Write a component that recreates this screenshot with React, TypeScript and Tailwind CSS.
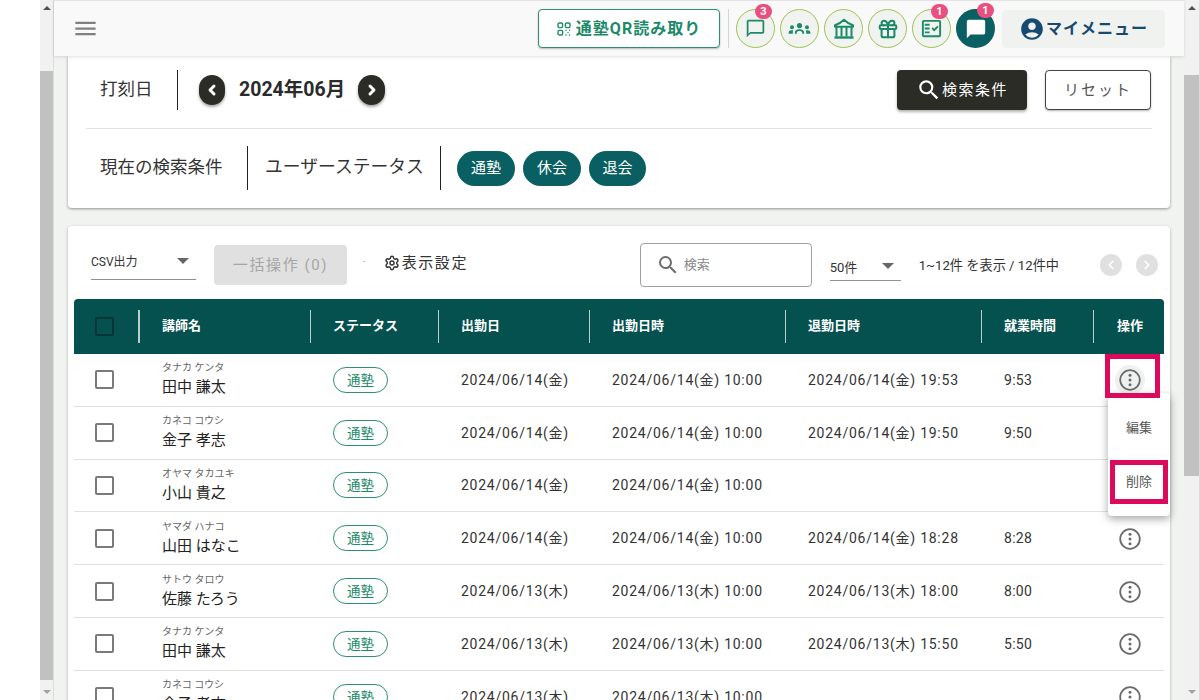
import React from 'react';
import { MdChatBubble, MdAccountCircle, MdOutlineFactCheck, MdSearch, MdOutlineChatBubbleOutline, MdMenu } from 'react-icons/md';
import { Gift, ChevronLeft, ChevronRight, Settings } from 'lucide-react';

interface Row {
  kana: string;
  name: string;
  date: string;
  start: string;
  end: string;
  hours: string;
}

const rows: Row[] = [
  { kana: 'タナカ ケンタ', name: '田中 謙太', date: '2024/06/14(金)', start: '2024/06/14(金) 10:00', end: '2024/06/14(金) 19:53', hours: '9:53' },
  { kana: 'カネコ コウシ', name: '金子 孝志', date: '2024/06/14(金)', start: '2024/06/14(金) 10:00', end: '2024/06/14(金) 19:50', hours: '9:50' },
  { kana: 'オヤマ タカユキ', name: '小山 貴之', date: '2024/06/14(金)', start: '2024/06/14(金) 10:00', end: '', hours: '' },
  { kana: 'ヤマダ ハナコ', name: '山田 はなこ', date: '2024/06/14(金)', start: '2024/06/14(金) 10:00', end: '2024/06/14(金) 18:28', hours: '8:28' },
  { kana: 'サトウ タロウ', name: '佐藤 たろう', date: '2024/06/13(木)', start: '2024/06/13(木) 10:00', end: '2024/06/13(木) 18:00', hours: '8:00' },
  { kana: 'タナカ ケンタ', name: '田中 謙太', date: '2024/06/13(木)', start: '2024/06/13(木) 10:00', end: '2024/06/13(木) 15:50', hours: '5:50' },
  { kana: 'カネコ コウシ', name: '金子 孝志', date: '2024/06/13(木)', start: '2024/06/13(木) 10:00', end: '', hours: '' },
];

const headers = ['講師名', 'ステータス', '出勤日', '出勤日時', '退勤日時', '就業時間', '操作'];
const gridCols = 'grid grid-cols-[65px_171px_128px_151px_196px_196px_112px_71px]';

const Scrollbar: React.FC<{ widthClass: string; thumbTop: string; thumbHeight: string }> = ({ widthClass, thumbTop, thumbHeight }) => (
  <div className={`${widthClass} shrink-0 bg-[#f1f1f1] flex flex-col items-center border-r border-[#dcdcdc]`}>
    <div className="h-[16px] w-full flex items-center justify-center">
      <div className="w-0 h-0 border-x-[4px] border-x-transparent border-b-[4px] border-b-[#505050]" />
    </div>
    <div className={`${thumbTop} ${thumbHeight} w-full bg-[#c1c1c1]`} />
    <div className="mt-auto h-[16px] w-full flex items-center justify-center">
      <div className="w-0 h-0 border-x-[4px] border-x-transparent border-t-[4px] border-t-[#a3a3a3]" />
    </div>
  </div>
);

const Circle: React.FC<{ badge?: string; children: React.ReactNode }> = ({ badge, children }) => (
  <div className="relative w-[39px] h-[39px] rounded-full border border-[#9cc44e] bg-[#f1f3f0] flex items-center justify-center text-[#1c8a68]">
    {children}
    {badge && (
      <span className="absolute -top-[6px] right-[2px] w-[17px] h-[15px] rounded-full bg-[#e94f7f] text-white text-[11px] font-bold leading-[15px] text-center">
        {badge}
      </span>
    )}
  </div>
);

const QrIcon: React.FC = () => (
  <svg width="14" height="14" viewBox="0 0 14 14" fill="none" stroke="currentColor" strokeWidth="1.4">
    <rect x="1" y="1" width="4.6" height="4.6" rx="1.3" />
    <rect x="8.4" y="1" width="4.6" height="4.6" rx="1.3" />
    <rect x="1" y="8.4" width="4.6" height="4.6" rx="1.3" />
    <path d="M8.4 8.4h1.2M12 8.4h1M10.4 10.7h1.2M8.4 13h1.2M12 13h1" strokeWidth="1.3" />
  </svg>
);

const GroupIcon: React.FC = () => (
  <svg width="25" height="25" viewBox="0 0 24 24" fill="currentColor">
    <circle cx="12" cy="9.2" r="2.5" />
    <path d="M7.6 17v-1.4c0-1.8 2-3 4.4-3s4.4 1.2 4.4 3V17h-1.8v-1.2c0-.8-1.1-1.4-2.6-1.4s-2.6.6-2.6 1.4V17z" />
    <circle cx="4.8" cy="10.8" r="1.9" />
    <circle cx="19.2" cy="10.8" r="1.9" />
    <path d="M1.6 17v-1.3c0-1.3 1.2-2.1 3-2.1.5 0 1 .1 1.4.2-.3.5-.4 1-.4 1.5V17zM22.4 17v-1.3c0-1.3-1.2-2.1-3-2.1-.5 0-1 .1-1.4.2.3.5.4 1 .4 1.5V17z" />
  </svg>
);

const BankIcon: React.FC = () => (
  <svg width="24" height="24" viewBox="0 0 24 24" fill="none" stroke="currentColor" strokeWidth="2" strokeLinejoin="round">
    <path d="M12 2.8c2.6 2.6 6 4.6 9 5.4v1.6H3V8.2c3-.8 6.4-2.8 9-5.4z" />
    <path d="M4.5 10v9.6M19.5 10v9.6M9.5 10v9.6M14.5 10v9.6" />
    <path d="M2.5 20.5h19" strokeWidth="2.4" />
  </svg>
);

const MoreIcon: React.FC<{ active?: boolean }> = ({ active }) => (
  <svg width="22" height="22" viewBox="0 0 22 22" fill="none" className={active ? 'rounded-full bg-[#eff1f1] shadow-[0_0_0_4px_#eff1f1]' : ''}>
    <circle cx="11" cy="11" r="9.8" stroke="#6b6b6b" strokeWidth="1.8" />
    <circle cx="11" cy="6.3" r="1.5" fill="#6b6b6b" />
    <circle cx="11" cy="11" r="1.5" fill="#6b6b6b" />
    <circle cx="11" cy="15.7" r="1.5" fill="#6b6b6b" />
  </svg>
);

const Checkbox: React.FC<{ dark?: boolean }> = ({ dark }) => (
  <div className={`w-[19px] h-[19px] rounded-[2px] border-2 ${dark ? 'border-[#0b3438]' : 'border-[#7a7a7a]'}`} />
);

const NavButton: React.FC<{ children: React.ReactNode; width: string }> = ({ children, width }) => (
  <div className={`${width} h-[30px] rounded-full bg-[#2b2c26] text-white flex items-center justify-center shadow-[0_2px_3px_rgba(0,0,0,0.35)]`}>
    {children}
  </div>
);

const Chip: React.FC<{ label: string; width: string }> = ({ label, width }) => (
  <span className={`${width} h-[35px] rounded-full bg-[#0a5f63] text-white text-[15px] flex items-center justify-center`}>{label}</span>
);

const App: React.FC = () => {
  return (
    <div className="relative flex w-[1200px] h-[700px] overflow-hidden bg-white text-[#333] font-['Roboto','Noto_Sans_CJK_JP',sans-serif]">
      <div className="w-[40px] shrink-0 bg-white" />
      <Scrollbar widthClass="w-[14px]" thumbTop="mt-[55px]" thumbHeight="h-[609px]" />

      <div className="w-[1130px] shrink-0 flex flex-col bg-[#f0f3f0]">
        {/* header */}
        <header className="relative z-10 h-[56px] shrink-0 flex items-center bg-[#f9f9f9] border-t border-[#e2e2e2] shadow-[0_1px_3px_rgba(0,0,0,0.12)]">
          <MdMenu className="ml-[18px] text-[#808080]" size={27} />
          <div className="ml-auto flex items-center">
            <div className="w-[182px] h-[39px] rounded-[4px] border border-[#2b9074] bg-white shadow-[0_1px_2px_rgba(0,0,0,0.25)] flex items-center justify-center gap-[5px] text-[#1c8a68] text-[16px] font-bold tracking-[1px]">
              <QrIcon />
              通塾QR読み取り
            </div>
            <div className="ml-[8px] mr-[7px] w-px h-[39px] bg-[#d5d5d5]" />
            <div className="flex items-center gap-[5px]">
              <Circle badge="3"><MdOutlineChatBubbleOutline size={21} /></Circle>
              <Circle><GroupIcon /></Circle>
              <Circle><BankIcon /></Circle>
              <Circle><Gift size={22} strokeWidth={2.2} /></Circle>
              <Circle badge="1"><MdOutlineFactCheck size={23} /></Circle>
              <div className="relative w-[39px] h-[39px] rounded-full bg-[#0a5f63] text-white flex items-center justify-center">
                <MdChatBubble size={22} />
                <span className="absolute -top-[6px] right-[1px] w-[17px] h-[15px] rounded-full bg-[#e94f7f] text-white text-[11px] font-bold leading-[15px] text-center">1</span>
              </div>
            </div>
            <div className="ml-[7px] mr-[19px] w-[163px] h-[38px] rounded-[4px] bg-[#f0f2ef] flex items-center justify-center gap-[1px] text-[#164a70] text-[16px] font-bold tracking-[1px]">
              <MdAccountCircle size={26} />
              マイメニュー
            </div>
          </div>
        </header>

        <main className="flex-1 overflow-hidden px-[14px]">
          {/* search conditions */}
          <section className="h-[152px] bg-white rounded-b-[4px] px-[18px] shadow-[0_1px_3px_rgba(0,0,0,0.4)]">
            <div className="h-[73px] pt-[14px] border-b border-[#e2e2e2] flex items-start">
              <span className="ml-[14px] w-[78px] h-[40px] leading-[38px] text-[17.5px] text-[#333] border-r border-[#222]">打刻日</span>
              <div className="ml-[21px] mt-[5px] flex items-center">
                <NavButton width="w-[26px]"><ChevronLeft size={16} strokeWidth={4.5} /></NavButton>
                <span className="ml-[14px] w-[119px] text-[19.5px] font-bold text-[#2b2b2b] leading-[26px] whitespace-nowrap">2024年06月</span>
                <NavButton width="w-[27px]"><ChevronRight size={16} strokeWidth={4.5} /></NavButton>
              </div>
              <div className="ml-auto mr-[1px] flex items-center gap-[18px]">
                <div className="w-[130px] h-[40px] rounded-[4px] bg-[#2b2c26] text-white text-[15px] tracking-[1.5px] flex items-center justify-center shadow-[0_2px_3px_rgba(0,0,0,0.3)]">
                  <MdSearch size={26} />
                  検索条件
                </div>
                <div className="w-[106px] h-[40px] rounded-[4px] bg-white border border-[#444] text-[#555] text-[15px] tracking-[2px] flex items-center justify-center shadow-[0_1px_2px_rgba(0,0,0,0.3)]">
                  リセット
                </div>
              </div>
            </div>
            <div className="h-[79px] flex items-start pt-[17px]">
              <span className="ml-[14px] w-[148px] h-[44px] leading-[42px] text-[17.5px] text-[#333] border-r border-[#222] whitespace-nowrap">現在の検索条件</span>
              <span className="ml-[17px] w-[176px] h-[44px] leading-[42px] text-[17.8px] text-[#333] border-r border-[#222] whitespace-nowrap">ユーザーステータス</span>
              <div className="ml-[16px] mt-[5px] flex gap-[8px]">
                <Chip label="通塾" width="w-[58px]" />
                <Chip label="休会" width="w-[58px]" />
                <Chip label="退会" width="w-[57px]" />
              </div>
            </div>
          </section>

          {/* list */}
          <section className="mt-[18px] bg-white rounded-t-[4px] px-[6px] shadow-[0_1px_3px_rgba(0,0,0,0.3)]">
            <div className="h-[73px] flex items-start pt-[17px]">
              <div className="ml-[17px] w-[105px] h-[36px] mt-[1px] border-b border-[#8f8f8f] flex items-start justify-between pt-[9px] pr-[7px] text-[12px] text-[#333]">
                <span>CSV出力</span>
                <span className="mt-[5px] w-0 h-0 border-x-[6px] border-x-transparent border-t-[6px] border-t-[#666]" />
              </div>
              <div className="ml-[18px] mt-[2px] w-[133px] h-[40px] rounded-[4px] bg-[#e0e0e0] text-[#a6a6a6] text-[15px] tracking-[1.6px] flex items-center justify-center">
                一括操作 (0)
              </div>
              <span className="ml-[16px] mt-[12px] text-[10px] text-[#888]">·</span>
              <div className="ml-[18px] mt-[9px] w-[90px] flex items-center text-[15px] tracking-[1.6px] text-[#333] whitespace-nowrap">
                <Settings size={16} strokeWidth={2.2} className="mr-[2px] shrink-0" />
                表示設定
              </div>
              <div className="ml-[166px] w-[172px] h-[44px] rounded-[4px] border border-[#a0a0a0] flex items-center pl-[15px] text-[13px] text-[#8a8a8a]">
                <MdSearch size={24} className="text-[#6d6d6d] mr-[4px]" />
                検索
              </div>
              <div className="ml-[18px] mt-[6px] w-[71px] h-[32px] border-b border-[#8f8f8f] flex items-start justify-between pt-[9px] pr-[7px] text-[13px] text-[#333]">
                <span>50件</span>
                <span className="mt-[5px] w-0 h-0 border-x-[6px] border-x-transparent border-t-[6px] border-t-[#666]" />
              </div>
              <span className="ml-[18px] mt-[13px] text-[13.2px] text-[#333] whitespace-nowrap">1~12件 を表示 / 12件中</span>
              <div className="ml-auto mr-[6px] mt-[11px] flex gap-[14px]">
                <span className="w-[22px] h-[22px] rounded-full bg-[#e0e0e0] text-white flex items-center justify-center"><ChevronLeft size={14} strokeWidth={3} /></span>
                <span className="w-[22px] h-[22px] rounded-full bg-[#e0e0e0] text-white flex items-center justify-center"><ChevronRight size={14} strokeWidth={3} /></span>
              </div>
            </div>

            <div className={`${gridCols} h-[55px] bg-[#04514f] rounded-t-[4px] text-white text-[13px] font-bold`}>
              <div className="flex items-center pl-[21px]">
                <Checkbox dark />
              </div>
              {headers.map((label, i) => (
                <div key={label} className="flex items-center pb-[1px]">
                  <div className={`${i === 0 ? 'w-[2px] -ml-[1px]' : 'w-px'} h-[33px] bg-[#b9cfcd]`} />
                  <span className={i === 6 ? 'pl-[23px]' : 'pl-[22px]'}>{label}</span>
                </div>
              ))}
            </div>

            {rows.map((row, i) => (
              <div key={i} className={`${gridCols} h-[52.8px] border-b border-[#e0e0e0] text-[14px] text-[#333] items-center`}>
                <div className="pl-[21px]"><Checkbox /></div>
                <div className="pl-[23px]">
                  <div className="text-[10px] leading-[12px] text-[#666] mb-[3px]">{row.kana}</div>
                  <div className="text-[15px] leading-[20px] text-[#222]">{row.name}</div>
                </div>
                <div className="pl-[23px]">
                  <span className="w-[55px] h-[26px] rounded-full border border-[#2b9074] text-[#1c8a68] text-[13.5px] flex items-center justify-center">通塾</span>
                </div>
                <div className="pl-[23px] pt-[1px] tracking-[0.75px]">{row.date}</div>
                <div className="pl-[23px] pt-[1px] tracking-[0.75px] whitespace-nowrap">{row.start}</div>
                <div className="pl-[23px] pt-[1px] tracking-[0.75px] whitespace-nowrap">{row.end}</div>
                <div className="pl-[23px] pt-[1px] tracking-[0.3px]">{row.hours}</div>
                <div className="pl-[26px] pt-[1px] flex items-center">
                  {i !== 1 && i !== 2 && <MoreIcon active={i === 0} />}
                </div>
              </div>
            ))}
          </section>
        </main>
      </div>

      <Scrollbar widthClass="w-[16px]" thumbTop="mt-[59px]" thumbHeight="h-[401px]" />

      {/* open row menu with the annotation boxes on top */}
      <div className="absolute left-[1108px] top-[393px] w-[62px] h-[123px] bg-white rounded-[4px] shadow-[0_3px_8px_rgba(0,0,0,0.35)] flex flex-col items-center text-[13px] text-[#555]">
        <span className="mt-[25px]">編集</span>
        <span className="mt-[34px]">削除</span>
      </div>
      <div className="absolute left-[1105px] top-[354px] w-[55px] h-[44px] border-[5px] border-[#dc0a5a]" />
      <div className="absolute left-[1110px] top-[460px] w-[58px] h-[44px] border-[5px] border-[#dc0a5a]" />
    </div>
  );
};

export default App;
